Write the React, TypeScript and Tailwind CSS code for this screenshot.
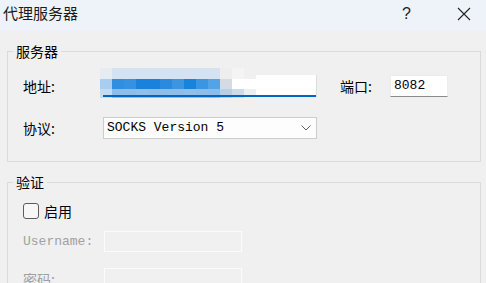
import React from 'react';

const cjk = "font-['Noto_Sans_CJK_SC','Noto_Sans',sans-serif]";
const mono = "font-['Liberation_Mono','DejaVu_Sans_Mono',monospace]";

// mosaic that hides the address text
const topRow = ['#e6ecf2', '#d6e2ef', '#d6e2ef', '#d6e2ef', '#d6e2ef', '#d6e2ef', '#d6e2ef', '#d6e2ef', '#d6e2ef', '#d6e2ef', '#eeeeee', '#f4f4f4', '#f0f0f0'];
const midRow = ['#a9cdee', '#2f8ee0', '#3591e1', '#1a82dc', '#1a82dc', '#2a8ae0', '#3c95e0', '#1683dc', '#3a95e3', '#52a4e6', '#d4dbe3', '#ffffff', '#ffffff'];
const botRow = ['#c4dcf2', '#8fbde8', '#8fbde8', '#92bfe8', '#8fbde8', '#8fbde8', '#8fbde8', '#92bfe8', '#8fbde8', '#8dbce8', '#b6cfe6', '#c9dcee', '#e8f0f7'];

const Mosaic: React.FC = () => (
    <div className="absolute left-[-3px] top-[-7px] flex flex-col blur-[0.6px]">
        {[topRow, midRow, botRow].map((row, r) => (
            <div key={r} className={`flex ${r === 0 ? 'h-[11px]' : r === 1 ? 'h-[10px]' : 'h-[9px]'}`}>
                {row.map((c, i) => (
                    <div key={i} className="w-[12px] h-full" style={{ backgroundColor: c }} />
                ))}
            </div>
        ))}
    </div>
);

const App: React.FC = () => {
    return (
        <div className={`w-[486px] h-[283px] overflow-hidden bg-[#f0f0f0] text-black ${cjk}`}>
            {/* Title bar */}
            <div className="h-[31px] bg-[#eef3f9] flex items-start pt-[3px]">
                <span className="pl-[3px] text-[15px] leading-[20px] text-[#1a1a1a]">代理服务器</span>
                <span className="ml-auto mt-[1px] text-[16px] leading-[20px] text-[#222] font-['Liberation_Sans',sans-serif]">?</span>
                <svg className="ml-[46px] mr-[15px] mt-[4px]" width="14" height="14" viewBox="0 0 14 14">
                    <path d="M1 1 L13 13 M13 1 L1 13" stroke="#222" strokeWidth="1.1" fill="none" />
                </svg>
            </div>

            <div className="pl-[7px] pr-[5px]">
                {/* Server group */}
                <fieldset className="mt-[12px] border border-[#dadada] pb-[22px]">
                    <legend className="ml-[5px] px-[3px] text-[14px] leading-[16px]">服务器</legend>
                    <div className="mt-[16px] flex items-center h-[22px]">
                        <span className="w-[95px] pl-[15px] text-[14px] leading-[16px]">地址:</span>
                        <div className="relative w-[214px] h-[22px] bg-white border-r border-[#dcdcdc]">
                            <Mosaic />
                            <div className="absolute left-0 right-0 bottom-0 h-[2px] bg-[#0067c0]" />
                        </div>
                        <span className="ml-[23px] w-[50px] text-[14px] leading-[16px]">端口:</span>
                        <div className={`w-[58px] h-[22px] bg-white border border-[#ececec] border-b-[#8a8a8a] pl-[3px] text-[13px] leading-[20px] ${mono}`}>8082</div>
                    </div>
                    <div className="mt-[20px] flex items-center h-[22px]">
                        <span className="w-[95px] pl-[15px] text-[14px] leading-[16px]">协议:</span>
                        <div className={`w-[214px] h-[22px] bg-[#fdfdfd] border border-[#cccccc] flex items-center pl-[3px] text-[13px] ${mono}`}>
                            <span>SOCKS Version 5</span>
                            <svg className="ml-auto mr-[5px]" width="10" height="6" viewBox="0 0 10 6">
                                <path d="M0.5 0.5 L5 5 L9.5 0.5" stroke="#606060" strokeWidth="1" fill="none" />
                            </svg>
                        </div>
                    </div>
                </fieldset>

                {/* Auth group */}
                <fieldset className="mt-[12px] border border-[#dadada] h-[140px]">
                    <legend className="ml-[5px] px-[3px] text-[14px] leading-[16px]">验证</legend>
                    <div className="mt-[13px] flex items-center h-[16px] pl-[15px]">
                        <div className="w-[16px] h-[16px] rounded-[3px] border border-[#5c5c5c] bg-[#f7f7f7]" />
                        <span className="ml-[5px] text-[14px] leading-[16px]">启用</span>
                    </div>
                    <div className="mt-[12px] flex items-center h-[21px]">
                        <span className={`w-[96px] pl-[15px] text-[13px] text-[#a0a0a0] ${mono}`}>Username:</span>
                        <div className="w-[138px] h-[21px] border border-[#fbfbfb] bg-[#f0f0f0]" />
                    </div>
                    <div className="mt-[16px] flex items-center h-[21px]">
                        <span className="w-[96px] pl-[15px] text-[14px] leading-[16px] text-[#a0a0a0]">密码:</span>
                        <div className="w-[138px] h-[21px] border border-[#fbfbfb] bg-[#f0f0f0]" />
                    </div>
                </fieldset>
            </div>
        </div>
    );
};

export default App;
